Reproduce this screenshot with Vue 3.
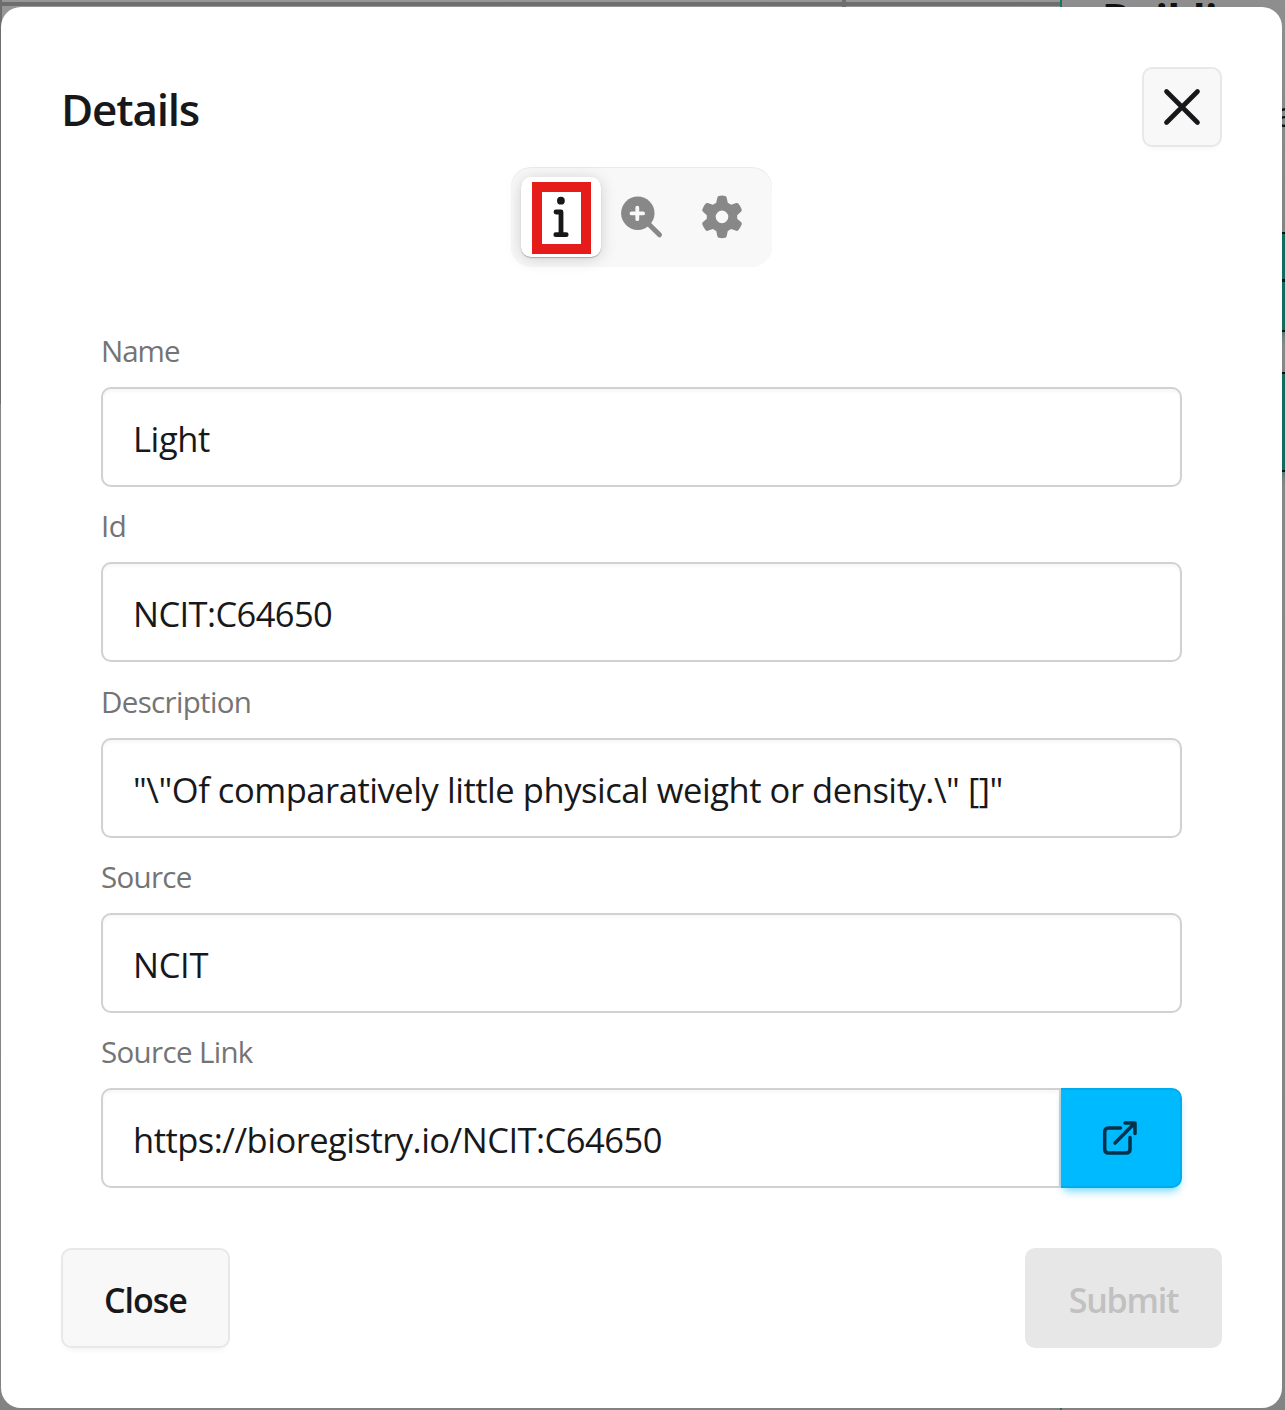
<script setup>
const fields = [
  { label: 'Name', value: 'Light', labelClass: 'l-name', valueClass: 'v-name' },
  { label: 'Id', value: 'NCIT:C64650', labelClass: 'l-id', valueClass: 'v-id' },
  { label: 'Description', value: '"\\"Of comparatively little physical weight or density.\\" []"', labelClass: 'l-desc', valueClass: 'v-desc' },
  { label: 'Source', value: 'NCIT', labelClass: 'l-source', valueClass: 'v-source' },
  { label: 'Source Link', value: 'https://bioregistry.io/NCIT:C64650', labelClass: 'l-link', valueClass: 'v-link', link: true },
]
</script>

<template>
  <div class="page">
    <div class="behind" aria-hidden="true">
      <i class="table-edge"></i>
      <i class="table-line"></i>
      <i class="column-line"></i>
      <i class="panel"></i>
      <i class="panel-line"></i>
      <b class="panel-title">Building</b>
      <span class="panel-text">a</span>
      <i class="node n1"></i>
      <i class="node n2"></i>
      <i class="node n3"></i>
    </div>

    <section class="dialog" role="dialog">
      <header class="head">
        <h1><span>Details</span></h1>
        <button class="x" aria-label="Close dialog">
          <svg width="40" height="40" viewBox="0 0 40 40"><path d="M4.5 4.5 35.500 35.500M35.500 4.500 4.500 35.500" fill="none" stroke="#18181b" stroke-width="4.700" stroke-linecap="round" /></svg>
        </button>
      </header>

      <nav class="tabs">
        <button class="tab active" aria-label="Info">
          <span class="mark">
            <svg width="39" height="52" viewBox="0 0 39 52">
              <circle cx="18.900" cy="8.700" r="3.900" fill="#18181b" />
              <path d="M14 20h5v22.700M13.800 42.700h10.400" fill="none" stroke="#18181b" stroke-width="4.800" stroke-linecap="round" stroke-linejoin="round" />
            </svg>
          </span>
        </button>
        <button class="tab" aria-label="Zoom">
          <svg width="48" height="48" viewBox="0 0 48 48">
            <circle cx="20.800" cy="20.200" r="16.700" fill="#888889" />
            <path d="m30 29.500 12.500 12.300" stroke="#888889" stroke-width="5" stroke-linecap="round" />
            <path d="M20.300 14.600v11.600M14.500 20.400h11.600" stroke="#f8f8f8" stroke-width="3.800" stroke-linecap="round" />
          </svg>
        </button>
        <button class="tab" aria-label="Settings">
          <svg width="48" height="48" viewBox="-1 0.500 48 48">
            <path fill="#888889" fill-rule="evenodd" d="M20.800 3.500Q24 2.300 27.200 3.500Q28.300 3.800 28.600 5L29.800 10.300L33.100 12.200L38.300 10.500Q39.500 10.200 40.300 11.100Q42.700 13.900 43.700 17Q44.100 18.200 43.200 19L39.200 22.700V26.300L43.200 29.800Q44.100 30.600 43.700 31.800Q42.600 35.100 40.300 37.700Q39.500 38.600 38.300 38.300L33.100 36.600L29.800 38.600L28.600 43.800Q28.300 45 27.200 45.300Q24 46.100 20.800 45.300Q19.700 45 19.400 43.800L18.200 38.600L14.900 36.600L9.700 38.300Q8.500 38.600 7.700 37.700Q5.400 35.100 4.300 31.800Q3.900 30.600 4.800 29.800L8.800 26.300V22.700L4.800 19Q3.900 18.200 4.300 17Q5.300 13.900 7.700 11.100Q8.500 10.200 9.700 10.500L14.900 12.200L18.200 10.300L19.400 5Q19.700 3.800 20.800 3.500ZM24 18.100a6.300 6.300 0 1 0 0 12.600a6.300 6.300 0 0 0 0-12.600Z" />
          </svg>
        </button>
      </nav>

      <div class="form">
        <div v-for="f in fields" :key="f.label" class="field">
          <label><span :class="f.labelClass">{{ f.label }}</span></label>
          <div class="row">
            <div class="input" :class="{ joined: f.link }"><span :class="f.valueClass">{{ f.value }}</span></div>
            <button v-if="f.link" class="open" aria-label="Open link">
              <svg width="40" height="40" viewBox="0 0 40 40" fill="none" stroke="#06314a" stroke-width="3.500" stroke-linecap="round" stroke-linejoin="round">
                <path d="M19.500 10H7.500Q3.700 10 3.700 14V31Q3.700 35 7.500 35H25Q29 35 29 31V19.500" />
                <path d="M14 25 33.800 5M24 5h10v10.500" />
              </svg>
            </button>
          </div>
        </div>
      </div>

      <footer class="foot">
        <button class="close"><span>Close</span></button>
        <button class="submit" disabled><span>Submit</span></button>
      </footer>
    </section>
  </div>
</template>

<style>
body { margin: 0; }
</style>

<style scoped>
* { box-sizing: border-box; }
button { border: 0; padding: 0; font: inherit; display: flex; align-items: center; justify-content: center; }
svg { display: block; }
.page {
  position: relative;
  width: 1285px;
  height: 1410px;
  padding: 7px 3px 2px 1px;
  overflow: hidden;
  background: linear-gradient(#979797, #888 200px, #838383);
  font-family: "Open Sans", "Noto Sans", sans-serif;
  color: #18181b;
}
.behind i, .behind b, .panel-text { position: absolute; }
.table-edge { left: 0; top: 0; width: 2px; height: 404px; background: #6e6e6e; }
.table-line { left: 0; top: 2px; width: 1060px; height: 4px; background: #6e6e6e; }
.column-line { left: 842px; top: 0; width: 4px; height: 7px; background: #6e6e6e; }
.panel { left: 1062px; right: 0; top: 0; height: 230px; background: linear-gradient(#8d8e8d, #858484); }
.panel-line { left: 1060px; top: 0; width: 2px; height: 1410px; background: #127763; }
.panel-title { left: 1102px; top: -10px; font: 700 41px/56px "Open Sans", sans-serif; color: #111; letter-spacing: -0.500px; }
.panel-text { left: 1276px; top: 94px; font-size: 35px; line-height: 40px; color: #111; }
.node { left: 1272px; width: 20px; background: #126d5e; border-top: 2px solid #0b0b0b; }
.n1 { top: 232px; height: 48px; }
.n2 { top: 279px; height: 53px; border-top-width: 3px; border-bottom: 2px solid #0b0b0b; box-shadow: 0 5px 6px #126d5e66; }
.n3 { top: 372px; height: 100px; border-bottom: 2px solid #0b0b0b; box-shadow: 0 5px 6px #126d5e66; }

.dialog {
  position: relative;
  height: 1401px;
  padding: 60px 60px;
  background: #fff;
  border-radius: 20px;
  display: flex;
  flex-direction: column;
}
.head { height: 80px; display: flex; justify-content: space-between; align-items: flex-start; }
h1 { margin: 0; padding-top: 4px; font-size: 44px; font-weight: 600; line-height: 76px; letter-spacing: -1.200px; }
.x { width: 80px; height: 80px; background: #f8f8f8; border: 2px solid #e8e8e8; border-radius: 10px; box-shadow: 0 5px 6px -4px #0000000d; }
.tabs {
  align-self: center;
  display: flex;
  margin-top: 20px;
  width: 261px;
  height: 100px;
  padding: 10px;
  border-radius: 20px;
  background: #f8f8f8;
  box-shadow: inset 0 1px 1px #0000000f;
}
.tab { width: 80px; height: 80px; border-radius: 10px; background: none; }
.tab.active { background: #fff; box-shadow: 0 1px 1px #00000040, 0 2px 16px #0000002b; padding-top: 2px; }
.mark { width: 59px; height: 72px; border: 10px solid #e61c1b; }
.form { margin: 65px 40px 0 40px; display: flex; flex-direction: column; gap: 15.250px; }
.field { height: 160px; display: flex; flex-direction: column; }
label { height: 55px; flex: none; line-height: 37px; font-size: 29.500px; color: #747475; }
.row { height: 100px; display: flex; }
.input {
  flex: 1;
  height: 100px;
  padding: 4px 30px 0;
  border: 2px solid #d1d1d1;
  border-radius: 10px;
  box-shadow: inset 0 3px 3px #00000008;
  font-size: 34.500px;
  line-height: 91px;
  white-space: pre;
}
.l-name { letter-spacing: -1px; }
.l-id { letter-spacing: -0.500px; }
.l-desc { letter-spacing: -0.660px; }
.l-source { letter-spacing: -0.700px; }
.l-link { letter-spacing: -0.650px; }
.v-name { letter-spacing: -0.400px; }
.v-id { letter-spacing: -0.600px; }
.v-desc { letter-spacing: -0.450px; }
.v-source { letter-spacing: -0.300px; }
.v-link { letter-spacing: -0.510px; }
.input.joined { border-radius: 10px 0 0 10px; }
.open { width: 121px; height: 100px; background: #00baff; border: 2px solid #00abeb; border-left: 0; border-radius: 0 10px 10px 0; box-shadow: 0 6px 8px -3px #00baff90; }
.foot { margin-top: 55px; display: flex; justify-content: space-between; font-size: 34px; font-weight: 600; }
.close, .submit { height: 100px; border-radius: 10px; padding-top: 3px; }
.close { width: 169px; background: #f8f8f8; border: 2px solid #e8e8e8; color: #18181b; letter-spacing: -1px; box-shadow: 0 6px 6px -4px #0000000d; }
.submit { width: 197px; background: #e7e7e7; color: #c1c1c1; letter-spacing: -1.250px; }
</style>
